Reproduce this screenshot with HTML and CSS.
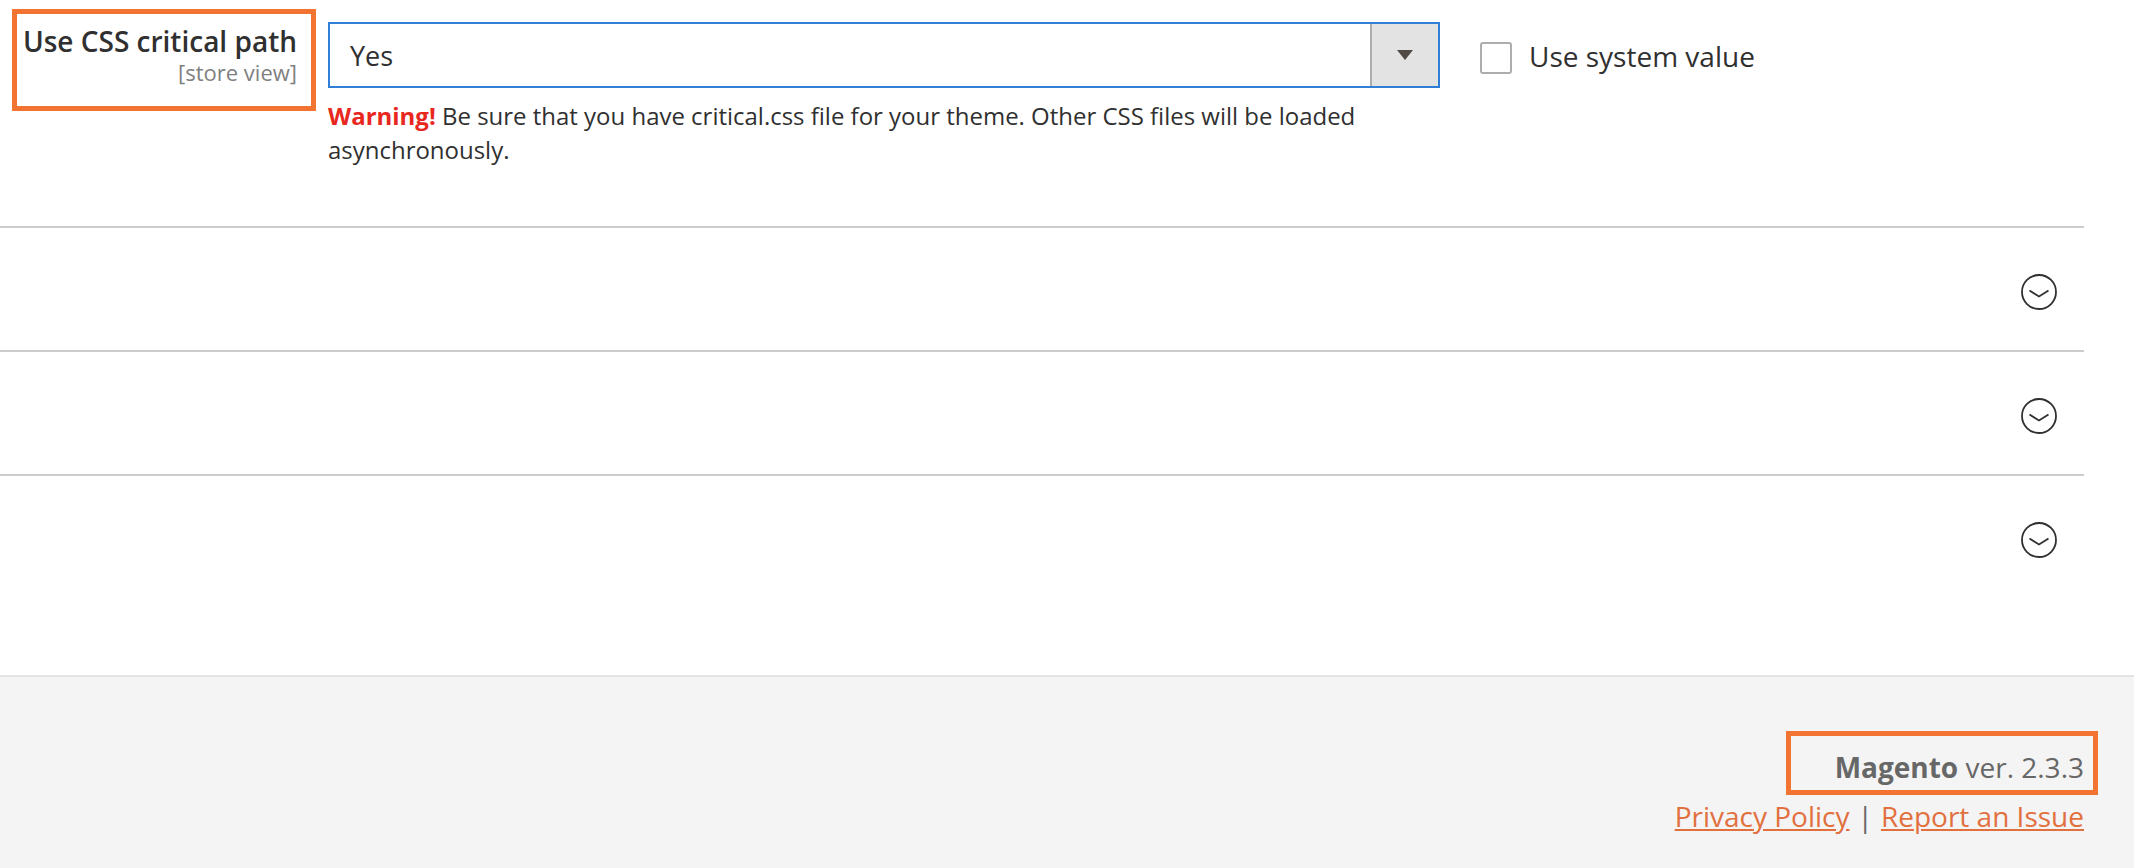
FILE: index.html
```html
<!DOCTYPE html>
<html lang="en">
<head>
<meta charset="utf-8">
<title>Magento configuration</title>
<link rel="stylesheet" href="styles.css">
</head>
<body>
<main class="content">
  <div class="field-row">
    <div class="label-box">
      <span class="label-title">Use CSS critical path</span>
      <span class="label-scope">[store view]</span>
    </div>
    <div class="control">
      <div class="select">
        <span class="select-value">Yes</span>
        <span class="select-btn"><span class="caret"></span></span>
      </div>
      <p class="note"><strong class="warn">Warning!</strong> Be sure that you have critical.css file for your theme. Other CSS files will be loaded asynchronously.</p>
    </div>
    <label class="inherit">
      <span class="checkbox"></span>
      <span class="inherit-text">Use system value</span>
    </label>
  </div>
  <div class="section">
    <svg class="chev" viewBox="0 0 36 36"><circle cx="18" cy="18" r="17"/><path d="M8.500 16.500 L18 22.500 L27.500 16.500"/></svg>
  </div>
  <div class="section">
    <svg class="chev" viewBox="0 0 36 36"><circle cx="18" cy="18" r="17"/><path d="M8.500 16.500 L18 22.500 L27.500 16.500"/></svg>
  </div>
  <div class="section">
    <svg class="chev" viewBox="0 0 36 36"><circle cx="18" cy="18" r="17"/><path d="M8.500 16.500 L18 22.500 L27.500 16.500"/></svg>
  </div>
</main>
<footer class="footer">
  <div class="version"><strong>Magento</strong> ver. 2.3.3</div>
  <div class="links"><a href="#">Privacy Policy</a><span class="sep">|</span><a href="#">Report an Issue</a></div>
</footer>
</body>
</html>
```
FILE: styles.css
```css
* { box-sizing: border-box; }
html, body { margin: 0; padding: 0; }
body {
  width: 2134px;
  height: 868px;
  overflow: hidden;
  background: #fff;
  font-family: "Open Sans", "Noto Sans", sans-serif;
  color: #303030;
  display: flex;
  flex-direction: column;
}
.content { height: 675px; flex: none; }
.field-row {
  height: 226px;
  padding: 9px 50px 0 12px;
  display: flex;
  align-items: flex-start;
}
.label-box {
  width: 304px;
  height: 102px;
  border: 5px solid #f27430;
  padding: 9px 14px 0 0;
  display: flex;
  flex-direction: column;
  align-items: flex-end;
  flex: none;
}
.label-title { font-size: 28px; font-weight: 600; line-height: 36px; color: #303030; }
.label-scope { font-size: 22px; line-height: 26px; color: #808080; }
.control { width: 1112px; margin: 13px 0 0 12px; flex: none; }
.select {
  height: 66px;
  border: 2px solid #2f7fd6;
  display: flex;
  align-items: center;
  font-size: 27px;
}
.select-value { flex: 1; padding-left: 20px; color: #303030; }
.select-btn {
  width: 68px;
  height: 100%;
  flex: none;
  background: #e3e3e3;
  border-left: 2px solid #adadad;
  display: flex;
  align-items: center;
  justify-content: center;
}
.caret {
  width: 0;
  height: 0;
  border-left: 8px solid transparent;
  border-right: 8px solid transparent;
  border-top: 10px solid #514943;
}
.note { margin: 11px 0 0; font-size: 23.970px; line-height: 34px; color: #303030; width: 1060px; }
.warn { color: #e8281f; font-weight: 700; }
.inherit {
  display: flex;
  align-items: center;
  margin: 33px 0 0 40px;
  gap: 17px;
}
.checkbox {
  width: 32px;
  height: 32px;
  border: 2px solid #adadad;
  border-radius: 3px;
  background: #fff;
  flex: none;
}
.inherit-text { font-size: 28px; line-height: 32px; color: #303030; margin-top: -4px; }
.section {
  width: 2084px;
  height: 124px;
  border-top: 2px solid #ccc;
  display: flex;
  align-items: center;
  justify-content: flex-end;
  padding: 6px 27px 0 0;
}
.chev { width: 36px; height: 36px; fill: none; stroke: #303030; stroke-width: 1.800; }
.footer {
  flex: 1;
  background: #f4f4f4;
  border-top: 2px solid #e3e3e3;
  padding: 54px 36px 0 0;
  display: flex;
  flex-direction: column;
  align-items: flex-end;
}
.version {
  width: 312px;
  height: 64px;
  border: 5px solid #f27430;
  padding: 13px 9px 0 0;
  text-align: right;
  font-size: 28px;
  line-height: 36px;
  color: #676767;
}
.version strong { font-weight: 700; }
.links { font-size: 28px; line-height: 36px; margin: 3px 14px 0 0; color: #676767; }
.links a { color: #e2703f; text-decoration: underline; }
.sep { margin: 0 8px; }
```
